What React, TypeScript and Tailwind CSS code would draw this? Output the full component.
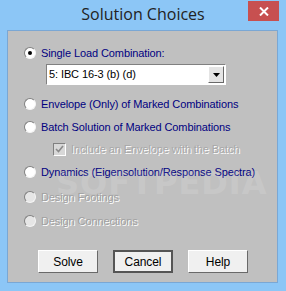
import React from "react";

// classic radio button
function Radio({ checked, disabled }: { checked?: boolean; disabled?: boolean }) {
  return (
    <span
      className={
        "flex items-center justify-center w-3 h-3 rounded-full border border-t-[#808080] border-l-[#808080] border-b-[#f4f4f4] border-r-[#f4f4f4] shrink-0 " +
        (disabled ? "bg-[#e6e6e6]" : "bg-white")
      }
    >
      {checked && <span className="block w-1 h-1 rounded-full bg-black" />}
    </span>
  );
}

function Option({
  label,
  checked,
  disabled,
}: {
  label: string;
  checked?: boolean;
  disabled?: boolean;
}) {
  return (
    <div className="flex items-center h-4 shrink-0 gap-[5px] whitespace-nowrap">
      <Radio checked={checked} disabled={disabled} />
      <span
        className={
          disabled
            ? "text-[#a0a0a0] [text-shadow:1px_1px_0_#ffffff]"
            : "text-[#000080]"
        }
      >
        {label}
      </span>
    </div>
  );
}

function Btn({ label, def }: { label: string; def?: boolean }) {
  return (
    <button
      className={
        "w-[60px] h-[23px] bg-[#f0f0f0] text-black text-[12px] " +
        (def
          ? "border-2 border-[#555]"
          : "border border-t-white border-l-white border-b-[#696969] border-r-[#696969]")
      }
    >
      {label}
    </button>
  );
}

export default function App() {
  return (
    <div className="w-[286px] h-[291px] bg-[#8cc6f6] flex flex-col font-['Liberation_Sans',sans-serif] text-[11px] tracking-[-0.1px]">
      {/* title bar */}
      <div className="h-[30px] shrink-0 flex relative">
        <div className="flex-1 flex items-center justify-center text-[16px] tracking-normal text-[#222] font-['Open_Sans',sans-serif] pb-[2px]">
          Solution Choices
        </div>
        <div className="absolute right-[7px] top-[1px] w-[31px] h-[20px] bg-[#c75050] flex items-center justify-center">
          <svg width="10" height="9" viewBox="0 0 10 9">
            <path d="M1 0.5 L9 8.5 M9 0.5 L1 8.5" stroke="white" strokeWidth="2" />
          </svg>
        </div>
      </div>

      {/* client area */}
      <div className="ml-[7px] w-[271px] h-[253px] shrink-0 bg-[#c0c0c0] border border-[#7aa7d4] relative flex flex-col pl-[16px] pt-[14px]">
        <Option label="Single Load Combination:" checked />
        <div className="ml-[22px] mt-[3px] w-[180px] h-[21px] shrink-0 bg-white border border-t-[#808080] border-l-[#808080] border-b-white border-r-white flex items-center">
          <span className="flex-1 pl-[2px] text-black">5: IBC 16-3 (b) (d)</span>
          <span className="w-[16px] h-[17px] mr-[1px] bg-[#e4e4e4] border border-t-white border-l-white border-b-[#696969] border-r-[#696969] flex items-center justify-center">
            <svg width="7" height="4" viewBox="0 0 7 4">
              <path d="M0 0 H7 L3.5 4 Z" fill="black" />
            </svg>
          </span>
        </div>
        <div className="mt-[11px] flex flex-col shrink-0">
          <Option label="Envelope (Only) of Marked Combinations" />
          <div className="mt-[7px]">
            <Option label="Batch Solution of Marked Combinations" />
          </div>
          <div className="ml-[29px] mt-[6px] flex items-center h-4 gap-[5px] whitespace-nowrap">
            <span className="w-[13px] h-[13px] bg-[#d8d8d8] border border-t-[#808080] border-l-[#808080] border-b-white border-r-white flex items-center justify-center">
              <svg width="9" height="8" viewBox="0 0 9 8">
                <path d="M1 4 L3.5 6.5 L8 1" stroke="#8a8a8a" strokeWidth="1.6" fill="none" />
              </svg>
            </span>
            <span className="text-[#a8a8a8] [text-shadow:1px_1px_0_#ffffff]">
              Include an Envelope with the Batch
            </span>
          </div>
          <div className="mt-[7px]">
            <Option label="Dynamics (Eigensolution/Response Spectra)" />
          </div>
          <div className="mt-[9px]">
            <Option label="Design Footings" disabled />
          </div>
          <div className="mt-[8px]">
            <Option label="Design Connections" disabled />
          </div>
        </div>

        <div className="mt-[21px] ml-[14px] flex gap-[15px] shrink-0">
          <Btn label="Solve" />
          <Btn label="Cancel" def />
          <Btn label="Help" />
        </div>

        {/* watermark */}
        <div className="absolute left-[48px] top-[128px] text-[32px] font-bold tracking-[1px] text-white opacity-[0.12] pointer-events-none font-['DejaVu_Sans',sans-serif]">
          SOFTPEDIA
        </div>
      </div>
    </div>
  );
}
